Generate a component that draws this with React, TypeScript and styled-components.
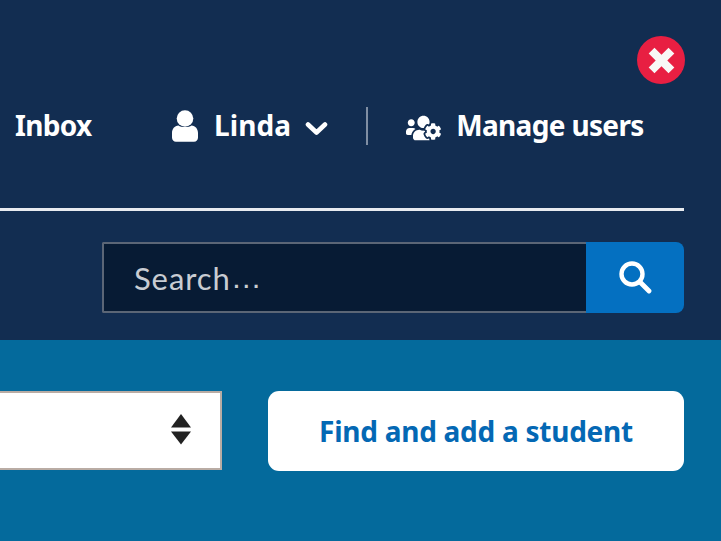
import React from "react";
import styled, { createGlobalStyle } from "styled-components";
import { FaUsersCog } from "react-icons/fa";

const GlobalStyle = createGlobalStyle`
  html, body {
    margin: 0;
    padding: 0;
    background: #046a9c;
  }
  * {
    box-sizing: border-box;
  }
`;

const App: React.FC = () => {
  return (
    <Page>
      <GlobalStyle />
      <Header>
        <CloseRow>
          <CloseButton type="button" aria-label="Close">
            <svg width="27" height="27" viewBox="3 3 20 20">
              <path
                d="M3.500 7.800 7.800 3.500 13 8.700 18.200 3.500 22.500 7.800 17.300 13 22.500 18.200 18.200 22.500 13 17.300 7.800 22.500 3.500 18.200 8.700 13Z"
                fill="#f8f8f6"
              />
            </svg>
          </CloseButton>
        </CloseRow>
        <NavRow>
          <NavLink $width={157}>Inbox</NavLink>
          <UserMenu>
            <svg width="26" height="32" viewBox="0 0 26 32">
              <circle cx="13" cy="8.500" r="8.300" fill="#fff" />
              <path
                d="M6.500 15.500C9 17.500 17 17.500 19.500 15.500 23.500 15.800 26 19 26 23V27.500C26 30 24.300 31.800 22 31.800H4C1.700 31.800 0 30 0 27.500V23C0 19 2.500 15.800 6.500 15.500Z"
                fill="#fff"
              />
            </svg>
            <NavLink $spacing={0.1}>Linda</NavLink>
            <svg width="23" height="15" viewBox="0 0 23 15">
              <path
                d="M3 3.500 11.500 11.500 20 3.500"
                fill="none"
                stroke="#fff"
                strokeWidth="4.600"
                strokeLinecap="round"
                strokeLinejoin="round"
              />
            </svg>
          </UserMenu>
          <Divider />
          <ManageLink>
            <ManageIcon />
            <NavLink>Manage users</NavLink>
          </ManageLink>
        </NavRow>
        <Rule />
        <SearchRow>
          <SearchBox>
            <SearchField role="searchbox">
              Search<SearchDots>…</SearchDots>
            </SearchField>
            <SearchButton type="button" aria-label="Search">
              <svg width="33" height="33" viewBox="0 0 33 33">
                <circle
                  cx="13"
                  cy="13"
                  r="10.500"
                  fill="none"
                  stroke="#fff"
                  strokeWidth="4.400"
                />
                <path
                  d="M21 21 30 30"
                  stroke="#fff"
                  strokeWidth="4.800"
                  strokeLinecap="round"
                />
              </svg>
            </SearchButton>
          </SearchBox>
        </SearchRow>
      </Header>
      <Actions>
        <SelectBox>
          <svg width="22" height="32" viewBox="0 0 22 32">
            <path d="M11 1 21 14.500H1Z" fill="#222" />
            <path d="M11 31.500 21 18.500H1Z" fill="#222" />
          </svg>
        </SelectBox>
        <FindButton type="button">Find and add a student</FindButton>
      </Actions>
    </Page>
  );
};

const Page = styled.div`
  overflow: hidden;
  display: flex;
  flex-direction: column;
  width: 721px;
  height: 541px;
  font-family: "Noto Sans", "Open Sans", sans-serif;
`;

const Header = styled.header`
  display: flex;
  flex-direction: column;
  height: 340px;
  padding-top: 36px;
  background: #122d51;
`;

const CloseRow = styled.div`
  display: flex;
  justify-content: flex-end;
  padding-right: 36px;
`;

const CloseButton = styled.button`
  display: flex;
  justify-content: center;
  align-items: center;
  width: 48px;
  height: 48px;
  padding: 0;
  border: 0;
  border-radius: 50%;
  background: #e81f42;
`;

const NavRow = styled.nav`
  display: flex;
  align-items: center;
  height: 40px;
  margin-top: 22px;
  padding-left: 15px;
  white-space: nowrap;
`;

const NavLink = styled.span<{ $width?: number; $spacing?: number }>`
  display: block;
  ${({ $width }) => $width && `width: ${$width}px;`}
  margin-top: -3px;
  font-size: 28px;
  font-weight: 700;
  line-height: 40px;
  letter-spacing: ${({ $spacing }) => $spacing ?? -0.66}px;
  color: #fff;
`;

const UserMenu = styled.div`
  display: flex;
  align-items: center;
  gap: 16px;
  & > svg:last-child {
    margin-top: 5px;
    margin-left: -2px;
  }
`;

const Divider = styled.div`
  width: 2px;
  height: 38px;
  margin-left: 38px;
  background: #7f8ea3;
`;

const ManageLink = styled.div`
  display: flex;
  align-items: center;
  margin-left: 38px;
`;

const ManageIcon = styled(FaUsersCog)`
  width: 35px;
  height: 28px;
  margin-right: 15px;
  margin-top: 3px;
  color: #fff;
`;

const Rule = styled.div`
  width: 684px;
  height: 3px;
  margin-top: 62px;
  background: #e8ebf0;
`;

const SearchRow = styled.div`
  display: flex;
  justify-content: flex-end;
  margin-top: 31px;
  padding-right: 37px;
`;

const SearchBox = styled.form`
  display: flex;
  width: 582px;
  height: 71px;
`;

const SearchField = styled.div`
  flex: 1;
  display: flex;
  align-items: center;
  min-width: 0;
  padding-left: 30px;
  border: 2px solid #5b6676;
  border-right: 0;
  border-radius: 2px 0 0 2px;
  background: #071b34;
  font-family: Lato, "Noto Sans", sans-serif;
  font-size: 31px;
  letter-spacing: 0.9px;
  color: #c8ccd2;
`;

const SearchDots = styled.span`
  margin-left: 0;
  font-family: "Liberation Sans", sans-serif;
`;

const SearchButton = styled.button`
  display: flex;
  justify-content: center;
  align-items: center;
  width: 98px;
  padding: 0;
  border: 0;
  border-radius: 0 8px 8px 0;
  background: #0470c1;
`;

const Actions = styled.section`
  flex: 1;
  display: flex;
  align-items: flex-start;
  gap: 46px;
  padding-top: 51px;
  background: #046a9c;
`;

const SelectBox = styled.div`
  display: flex;
  justify-content: flex-end;
  align-items: center;
  width: 222px;
  height: 79px;
  padding: 0 28px 3px 0;
  border: 2px solid #b9aca4;
  border-left: 0;
  background: #fff;
`;

const FindButton = styled.button`
  width: 416px;
  height: 80px;
  padding: 0;
  border: 0;
  border-radius: 11px;
  background: #fff;
  font-family: "Noto Sans", "Open Sans", sans-serif;
  font-size: 28px;
  font-weight: 700;
  letter-spacing: -0.26px;
  color: #0468b4;
`;

export default App;
